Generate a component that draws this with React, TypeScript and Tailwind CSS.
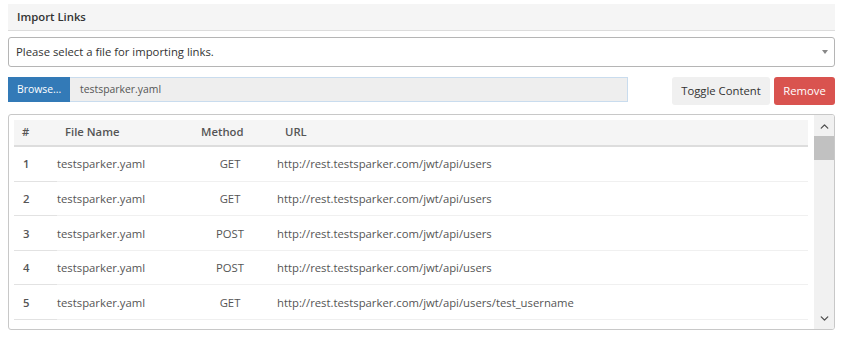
import { ChevronDown, ChevronUp } from "lucide-react";

type LinkRow = {
  id: number;
  fileName: string;
  method: "GET" | "POST";
  url: string;
};

const rows: LinkRow[] = [
  { id: 1, fileName: "testsparker.yaml", method: "GET", url: "http://rest.testsparker.com/jwt/api/users" },
  { id: 2, fileName: "testsparker.yaml", method: "GET", url: "http://rest.testsparker.com/jwt/api/users" },
  { id: 3, fileName: "testsparker.yaml", method: "POST", url: "http://rest.testsparker.com/jwt/api/users" },
  { id: 4, fileName: "testsparker.yaml", method: "POST", url: "http://rest.testsparker.com/jwt/api/users" },
  { id: 5, fileName: "testsparker.yaml", method: "GET", url: "http://rest.testsparker.com/jwt/api/users/test_username" },
];

const cols = "grid grid-cols-[43px_136px_84px_1fr]";

export default function App() {
  return (
    <div className="w-[843px] h-[342px] bg-white px-2 pt-1 font-['Open_Sans',sans-serif] text-[11.3px] text-[#333]">
      {/* panel heading */}
      <div className="h-[27px] bg-[#f5f5f5] border-b border-[#dcdcdc] flex items-center pl-[9px] font-semibold">
        Import Links
      </div>

      {/* file select */}
      <div className="mt-[6px] h-[30px] border border-[#b5b5b5] rounded-[3px] flex items-center pl-[7px] pr-[6px]">
        <span className="flex-1">Please select a file for importing links.</span>
        <span className="w-0 h-0 border-x-[3.5px] border-x-transparent border-t-[4px] border-t-[#888]" />
      </div>

      {/* browse row */}
      <div className="mt-[10px] flex items-start">
        <button className="h-[25px] w-[62px] bg-[#337ab7] text-white text-[10.4px] flex items-center pl-[9px]">
          Browse...
        </button>
        <div className="h-[25px] w-[558px] bg-[#eee] border border-[#c9dcee] border-l-0 flex items-center pl-[10px] text-[10.4px] text-[#555]">
          testsparker.yaml
        </div>
        <div className="flex-1" />
        <button className="h-[28px] w-[98px] bg-[#f0f0f0] rounded-[3px] text-[#333]">Toggle Content</button>
        <button className="ml-[4px] h-[28px] w-[61px] bg-[#d9534f] rounded-[3px] text-white">Remove</button>
      </div>

      {/* table */}
      <div className="mt-[9px] h-[216px] border border-[#c8c8c8] rounded-[3px] flex overflow-hidden">
        <div className="flex-1 pl-[5px] pr-[6px] pt-[5px] overflow-hidden text-[#555]">
          <div className={`${cols} h-[27px] bg-[#f5f5f5] border-b-2 border-[#ddd] items-center font-semibold`}>
            <div className="pl-[8px]">#</div>
            <div className="pl-[8px]">File Name</div>
            <div className="pl-[8px]">Method</div>
            <div className="pl-[8px]">URL</div>
          </div>
          {rows.map((r) => (
            <div key={r.id} className={`${cols} h-[34.6px] items-stretch`}>
              <div className="pl-[9px] pt-[2px] flex items-center font-semibold border-b border-[#e2e2e2]">{r.id}</div>
              <div className="pt-[2px] flex items-center border-b border-[#f0f0f0]">{r.fileName}</div>
              <div className="pt-[2px] flex items-center justify-center pr-[10px] border-b border-[#f0f0f0]">{r.method}</div>
              <div className="pt-[2px] flex items-center border-b border-[#f0f0f0]">{r.url}</div>
            </div>
          ))}
        </div>
        <div className="w-[20px] bg-[#f1f1f1] flex flex-col items-center">
          <ChevronUp className="w-[13px] h-[13px] text-[#505050] mt-[5px]" strokeWidth={2.5} />
          <div className="w-[20px] h-[24px] bg-[#c1c1c1] mt-[3px]" />
          <div className="flex-1" />
          <ChevronDown className="w-[13px] h-[13px] text-[#505050] mb-[4px]" strokeWidth={2.5} />
        </div>
      </div>
    </div>
  );
}
